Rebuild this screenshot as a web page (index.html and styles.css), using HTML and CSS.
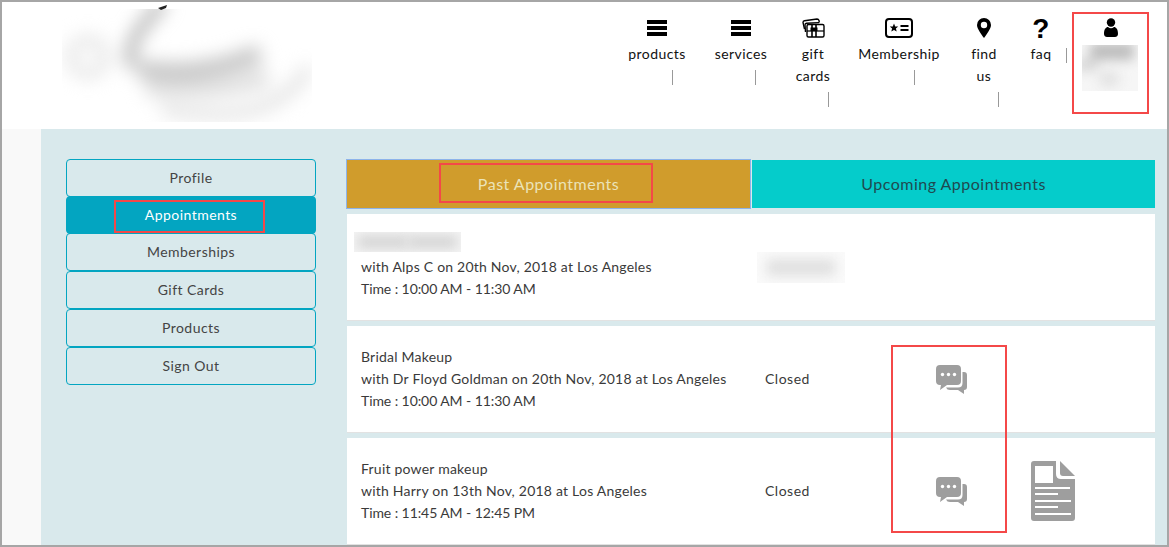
FILE: index.html
```html
<html lang="en">
<head>
  <meta charset="UTF-8">
  <title>My Appointments</title>
  <link rel="stylesheet" href="styles.css">
</head>
<body>
  <div class="frame">
    <header class="top">
      <svg class="logo" viewBox="0 0 250 117" width="250" height="117">
        <defs><clipPath id="logo-clip"><rect x="0" y="4" width="250" height="113"/></clipPath></defs>
        <g clip-path="url(#logo-clip)">
          <g class="logo-blur">
            <circle cx="26" cy="52" r="17" fill="none" stroke="#e4e4e4" stroke-width="10"/>
            <path d="M102 -4 L80 22 Q64 44 70 62" fill="none" stroke="#b2b2b2" stroke-width="11"/>
            <path d="M76 64 Q140 74 198 48" fill="none" stroke="#c6c6c6" stroke-width="18"/>
            <path d="M84 82 Q150 90 206 72" fill="none" stroke="#e0e0e0" stroke-width="18"/>
            <path d="M100 104 Q215 125 246 62" fill="none" stroke="#e2e2e2" stroke-width="11"/>
          </g>
        </g>
        <path d="M96 3 L105 0 L104 3 L99 5Z" fill="#222"/>
      </svg>
      <nav class="nav">
        <a class="nav-item item-products">
          <svg class="nav-icon" viewBox="0 0 20 20" width="20" height="20"><path d="M0 2h20v4H0zM0 8h20v4H0zM0 14h20v4H0z"/></svg>
          <span class="nav-label">products</span>
          <i class="sep sep-products"></i>
        </a>
        <a class="nav-item item-services">
          <svg class="nav-icon" viewBox="0 0 20 20" width="20" height="20"><path d="M0 2h20v4H0zM0 8h20v4H0zM0 14h20v4H0z"/></svg>
          <span class="nav-label">services</span>
          <i class="sep sep-services"></i>
        </a>
        <a class="nav-item item-gift">
          <svg class="nav-icon" viewBox="0 0 23 20" width="23" height="20" fill="none" stroke="#000" stroke-width="1.4">
            <path d="M2.500 11 L1 4.500 Q1 3 2.500 2.700 L15 1 Q16.500 1 17 2.500 L17.300 4.500"/>
            <path d="M3.500 14 L3 7 Q3 5.500 4.500 5.300 L17 4.600"/>
            <rect x="5" y="6.500" width="17" height="12.500" rx="1.500"/>
            <path d="M5 13h17" stroke-width="1.2"/>
            <path d="M10 7v12M14 7v12" stroke-width="1.6"/>
            <path d="M8.500 9.500h7v3.500h-7z" fill="#000" stroke="none"/>
          </svg>
          <span class="nav-label">gift cards</span>
          <i class="sep sep-gift"></i>
        </a>
        <a class="nav-item item-membership">
          <svg class="nav-icon" viewBox="0 0 28 20" width="28" height="20">
            <rect x="1" y="1" width="26" height="18" rx="3" fill="none" stroke="#000" stroke-width="2"/>
            <path d="M9 5.500l1.200 2.900 3 .2-2.300 2 .8 3L9 12l-2.700 1.600.8-3-2.300-2 3-.2z"/>
            <path d="M15.500 7h8v2h-8zM15.500 11h8v2h-8z"/>
          </svg>
          <span class="nav-label">Membership</span>
          <i class="sep sep-membership"></i>
        </a>
        <a class="nav-item item-find">
          <svg class="nav-icon" viewBox="0 0 14 20" width="14" height="20">
            <path fill-rule="evenodd" d="M7 0a7 7 0 0 1 7 7c0 3.500-4 9-7 13C4 16 0 10.500 0 7a7 7 0 0 1 7-7zm0 3.800a3.200 3.200 0 1 0 0 6.400 3.200 3.200 0 0 0 0-6.400z"/>
          </svg>
          <span class="nav-label">find us</span>
          <i class="sep sep-find"></i>
        </a>
        <a class="nav-item item-faq">
          <span class="faq-glyph">?</span>
          <span class="nav-label">faq</span>
        </a>
        <i class="sep sep-faq"></i>
        <a class="nav-item item-user">
          <svg class="nav-icon" viewBox="0 0 14 20" width="14" height="20">
            <circle cx="7" cy="4.500" r="4.200"/>
            <path d="M0 16c0-5 2-7 4-7 1 .8 2 1.200 3 1.200S9 9.800 10 9c2 0 4 2 4 7 0 2-1.500 3-3 3H3c-1.500 0-3-1-3-3z"/>
          </svg>
          <svg class="user-name" viewBox="0 0 56 46" width="56" height="46">
            <rect width="56" height="46" fill="#f6f6f6"/>
            <g class="user-blur">
              <rect x="8" y="-2" width="44" height="17" fill="#bcbcbc"/>
              <rect x="-6" y="14" width="22" height="12" fill="#d6d6d6"/>
              <ellipse cx="27" cy="34" rx="11" ry="8" fill="#e2e2e2"/>
            </g>
          </svg>
        </a>
      </nav>
    </header>

    <div class="main">
      <div class="gutter"></div>
      <div class="content">
        <aside class="side">
          <a class="side-link">Profile</a>
          <a class="side-link is-active">Appointments</a>
          <a class="side-link">Memberships</a>
          <a class="side-link">Gift Cards</a>
          <a class="side-link">Products</a>
          <a class="side-link">Sign Out</a>
        </aside>

        <section class="list">
          <div class="tabs">
            <a class="tab tab-past">Past Appointments</a>
            <a class="tab tab-upcoming">Upcoming Appointments</a>
          </div>

          <div class="card">
            <div class="info">
              <div class="title-blur"><i></i><i></i></div>
              <div>with Alps C on 20th Nov, 2018 at Los Angeles</div>
              <div class="time">Time : 10:00 AM - 11:30 AM</div>
            </div>
            <div class="status"><div class="status-blur"><i></i></div></div>
          </div>

          <div class="card">
            <div class="info">
              <div>Bridal Makeup</div>
              <div>with Dr Floyd Goldman on 20th Nov, 2018 at Los Angeles</div>
              <div class="time">Time : 10:00 AM - 11:30 AM</div>
            </div>
            <div class="status">Closed</div>
            <svg class="chat" viewBox="0 0 31 29" width="31" height="29">
              <path d="M4 0h17a4 4 0 0 1 4 4v12a4 4 0 0 1-4 4H11l-7 5 1-5H4a4 4 0 0 1-4-4V4a4 4 0 0 1 4-4z"/>
              <path d="M26.500 7H28q3 0 3 3v12q0 3-3 3v4l-6-4h-8q-3 0-4-2.500h12q4.500 0 4.500-4.500z"/>
              <circle class="dot" cx="6.500" cy="9.500" r="1.700"/><circle class="dot" cx="12.500" cy="9.500" r="1.700"/><circle class="dot" cx="18.500" cy="9.500" r="1.700"/>
            </svg>
          </div>

          <div class="card">
            <div class="info">
              <div>Fruit power makeup</div>
              <div>with Harry on 13th Nov, 2018 at Los Angeles</div>
              <div class="time">Time : 11:45 AM - 12:45 PM</div>
            </div>
            <div class="status">Closed</div>
            <svg class="chat" viewBox="0 0 31 29" width="31" height="29">
              <path d="M4 0h17a4 4 0 0 1 4 4v12a4 4 0 0 1-4 4H11l-7 5 1-5H4a4 4 0 0 1-4-4V4a4 4 0 0 1 4-4z"/>
              <path d="M26.500 7H28q3 0 3 3v12q0 3-3 3v4l-6-4h-8q-3 0-4-2.500h12q4.500 0 4.500-4.500z"/>
              <circle class="dot" cx="6.500" cy="9.500" r="1.700"/><circle class="dot" cx="12.500" cy="9.500" r="1.700"/><circle class="dot" cx="18.500" cy="9.500" r="1.700"/>
            </svg>
            <svg class="doc" viewBox="0 0 44 60" width="44" height="60">
              <path d="M3 0h22v13q0 5 5 5h14v39q0 3-3 3H3q-3 0-3-3V3q0-3 3-3z"/>
              <path d="M29 0l15 15H32q-3 0-3-3z"/>
              <path class="doc-cut" d="M4 5h18v17H4zM4 26h35v2H4zM4 32h23v2H4zM4 39h36v2H4zM4 45h23v2H4zM4 52h36v2H4z"/>
            </svg>
          </div>
        </section>
      </div>
    </div>

    <div class="mark mark-user"></div>
    <div class="mark mark-tab"></div>
    <div class="mark mark-side"></div>
    <div class="mark mark-chat"></div>
  </div>
</body>
</html>
```

FILE: styles.css
```css
body {
  margin: 0;
  background: #fff;
  font-family: "Lato", "Open Sans", sans-serif;
  font-size: 14px;
  color: #3a3a3a;
}

.frame {
  position: relative;
  width: 1169px;
  height: 547px;
  box-sizing: border-box;
  border: 2px solid #a6a6a6;
  overflow: hidden;
}

/* top bar */
.top {
  display: flex;
  justify-content: space-between;
  height: 127px;
  background: #fff;
}

.logo {
  margin: 3px 0 0 60px;
}

.logo-blur { filter: blur(9px); }
.user-blur { filter: blur(6px); }

.nav {
  display: flex;
  align-items: flex-start;
  padding: 16px 29px 0 0;
  color: #111;
  letter-spacing: .45px;
}

.nav-item {
  display: flex;
  flex-direction: column;
  align-items: center;
  margin-left: 26px;
  line-height: 22px;
  text-align: center;
}

.nav-icon { margin-bottom: 5px; }

.item-products { width: 60px; }
.item-services { width: 56px; }
.item-gift { width: 36px; }
.item-membership { width: 84px; }
.item-find { width: 34px; }
.item-faq { width: 28px; }
.item-user { width: 56px; margin-left: 15px; }
.item-user .nav-icon { margin-left: 2px; }

.faq-glyph {
  height: 25px;
  font-family: "Liberation Sans", sans-serif;
  font-size: 28px;
  font-weight: bold;
  line-height: 22px;
  color: #000;
}

.user-name { display: block; margin-top: 2px; }

.sep {
  display: block;
  width: 1px;
  height: 15px;
  margin-top: 5px;
  background: #999;
  align-self: flex-start;
}

.sep-products { margin-left: 45px; }
.sep-services { margin-left: 42px; }
.sep-gift { margin-left: 33px; }
.sep-membership { margin-left: 57px; }
.sep-find { margin-left: 31px; }
.sep-faq { margin: 30px 0 0 11px; }

/* main area */
.main {
  display: flex;
  height: 500px;
}

.gutter {
  width: 39px;
  background: #f9f9f9;
}

.content {
  display: flex;
  flex: 1;
  gap: 31px;
  padding: 30px 12px 0 25px;
  background: #d9e9ec;
}

.side {
  display: flex;
  flex-direction: column;
  width: 250px;
  letter-spacing: .45px;
}

.side-link {
  display: block;
  height: 36px;
  border: 1px solid #03a5c1;
  border-radius: 4px;
  line-height: 36px;
  text-align: center;
  color: #444;
}

.side-link.is-active {
  margin: -1px 0;
  background: #03a5c1;
  color: #fff;
}

.list { flex: 1; }

.tabs {
  display: flex;
  margin-top: 1px;
}

.tab {
  width: 403px;
  height: 48px;
  line-height: 48px;
  font-size: 16px;
  letter-spacing: .5px;
  text-align: center;
}

.tab-past {
  margin-right: 2px;
  background: #d09c2c;
  color: #ebe3b8;
  box-shadow: 0 0 0 1px #8db3ea;
}

.tab-upcoming {
  background: #05cccb;
  color: #1f4a50;
}

.card {
  display: flex;
  align-items: center;
  height: 106px;
  margin-top: 6px;
  background: #fff;
  border-bottom: 1px solid #e2e2e2;
}

.card + .card { margin-top: 5px; }

.info {
  box-sizing: border-box;
  width: 418px;
  padding-left: 14px;
  line-height: 22px;
  letter-spacing: .22px;
}

.time { letter-spacing: -.08px; }

.status {
  width: 171px;
  line-height: 22px;
  letter-spacing: .5px;
}

.title-blur {
  display: flex;
  width: 107px;
  height: 20px;
  margin: -2px 0 4px -7px;
  padding: 4px 4px;
  box-sizing: border-box;
  background: #f4f4f4;
  overflow: hidden;
}

.title-blur i {
  flex: 1;
  background: #d2d2d2;
  filter: blur(6px);
}

.status-blur {
  width: 88px;
  height: 31px;
  margin-left: -8px;
  padding: 7px 10px;
  box-sizing: border-box;
  background: #fafafa;
  overflow: hidden;
}

.status-blur i {
  display: block;
  height: 100%;
  background: #e0e0e0;
  filter: blur(6px);
}

.chat { fill: #9e9e9e; }
.dot { fill: #fff; }

.doc {
  margin-left: 64px;
  fill: #9e9e9e;
}

.doc-cut { fill: #fff; }

/* red annotation boxes */
.mark {
  position: absolute;
  box-sizing: border-box;
  border: 2px solid #f44848;
}

.mark-user { left: 1070px; top: 10px; width: 77px; height: 102px; }
.mark-tab { left: 437px; top: 161px; width: 214px; height: 40px; }
.mark-side { left: 112px; top: 198px; width: 151px; height: 33px; }
.mark-chat { left: 889px; top: 343px; width: 116px; height: 188px; }
```
